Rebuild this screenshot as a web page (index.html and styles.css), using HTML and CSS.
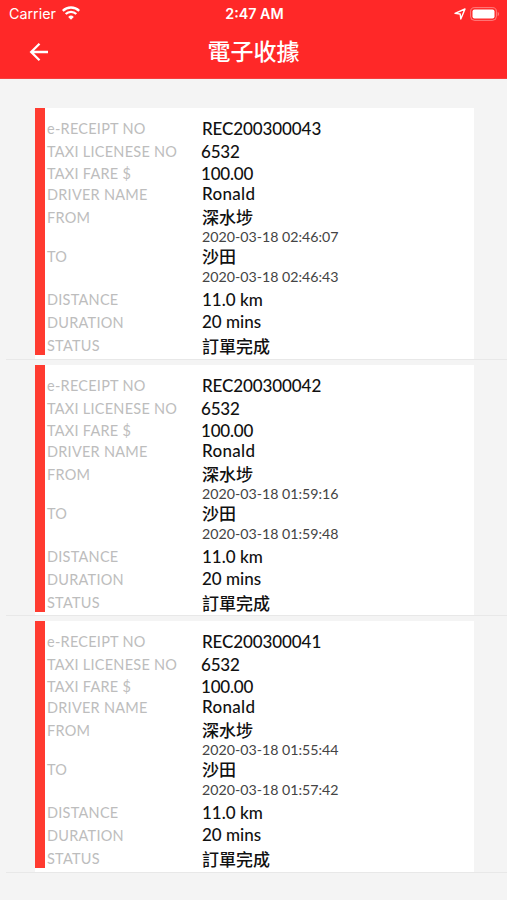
FILE: index.html
```html
<!DOCTYPE html>
<html lang="zh-Hant">
<head>
  <meta charset="UTF-8">
  <meta name="viewport" content="width=device-width, initial-scale=1.0">
  <title>電子收據</title>
  <link rel="stylesheet" href="styles.css">
</head>
<body>
  <header class="header">
    <!-- Status bar -->
    <div class="status-bar">
      <div class="carrier">
        <span>Carrier</span>
        <svg class="wifi" width="18" height="14" viewBox="0 0 18 14" fill="none" stroke="#fff" stroke-width="2.3">
          <path d="M.8 4.8a11.8 11.8 0 0 1 16.4 0"/>
          <path d="M3.7 8a7.5 7.5 0 0 1 10.6 0"/>
          <path d="M9 13.8L6.2 10.9a4 4 0 0 1 5.6 0z" fill="#fff" stroke="none"/>
        </svg>
      </div>
      <div class="time">2:47 AM</div>
      <div class="indicators">
        <svg width="12" height="12" viewBox="0 0 12 12" fill="none" stroke="#fff" stroke-width="1.4" stroke-linejoin="round">
          <path d="M1 5.4L11 1L6.8 11L6.2 6z"/>
        </svg>
        <svg width="30" height="14" viewBox="0 0 30 14">
          <rect x="0.6" y="0.6" width="25.8" height="12.8" rx="4" fill="none" stroke="#fff" stroke-opacity="0.4"/>
          <rect x="2.5" y="2.5" width="22" height="9" rx="2" fill="#fff"/>
          <path d="M27.7 4.8a2.5 2.5 0 0 1 0 4.4z" fill="#fff" fill-opacity="0.4"/>
        </svg>
      </div>
    </div>

    <!-- Title bar -->
    <div class="title-bar">
      <svg class="back" width="20" height="20" viewBox="0 0 20 20" fill="none" stroke="#fff" stroke-width="2.3">
        <path d="M19 10H2.5M10.5 1.7L2.2 10l8.3 8.3"/>
      </svg>
      <h1>電子收據</h1>
    </div>
  </header>

  <main class="receipts">
    <section class="item">
      <div class="card">
        <span class="label">e-RECEIPT NO</span><span class="value number">REC200300043</span>
        <span class="label">TAXI LICENESE NO</span><span class="value licence">6532</span>
        <span class="label">TAXI FARE $</span><span class="value fare">100.00</span>
        <span class="label">DRIVER NAME</span><span class="value name">Ronald</span>
        <span class="label">FROM</span><span class="value place">深水埗</span>
        <span class="date">2020-03-18 02:46:07</span>
        <span class="label">TO</span><span class="value place">沙田</span>
        <span class="date">2020-03-18 02:46:43</span>
        <span class="label">DISTANCE</span><span class="value">11.0 km</span>
        <span class="label">DURATION</span><span class="value duration">20 mins</span>
        <span class="label">STATUS</span><span class="value status">訂單完成</span>
      </div>
    </section>

    <section class="item">
      <div class="card">
        <span class="label">e-RECEIPT NO</span><span class="value number">REC200300042</span>
        <span class="label">TAXI LICENESE NO</span><span class="value licence">6532</span>
        <span class="label">TAXI FARE $</span><span class="value fare">100.00</span>
        <span class="label">DRIVER NAME</span><span class="value name">Ronald</span>
        <span class="label">FROM</span><span class="value place">深水埗</span>
        <span class="date">2020-03-18 01:59:16</span>
        <span class="label">TO</span><span class="value place">沙田</span>
        <span class="date">2020-03-18 01:59:48</span>
        <span class="label">DISTANCE</span><span class="value">11.0 km</span>
        <span class="label">DURATION</span><span class="value duration">20 mins</span>
        <span class="label">STATUS</span><span class="value status">訂單完成</span>
      </div>
    </section>

    <section class="item">
      <div class="card">
        <span class="label">e-RECEIPT NO</span><span class="value number">REC200300041</span>
        <span class="label">TAXI LICENESE NO</span><span class="value licence">6532</span>
        <span class="label">TAXI FARE $</span><span class="value fare">100.00</span>
        <span class="label">DRIVER NAME</span><span class="value name">Ronald</span>
        <span class="label">FROM</span><span class="value place">深水埗</span>
        <span class="date">2020-03-18 01:55:44</span>
        <span class="label">TO</span><span class="value place">沙田</span>
        <span class="date">2020-03-18 01:57:42</span>
        <span class="label">DISTANCE</span><span class="value">11.0 km</span>
        <span class="label">DURATION</span><span class="value duration">20 mins</span>
        <span class="label">STATUS</span><span class="value status">訂單完成</span>
      </div>
    </section>
  </main>
</body>
</html>
```

FILE: styles.css
```css
* {
  box-sizing: border-box;
}

body {
  margin: 0;
  min-height: 900px;
  background-color: #f4f4f4;
  font-family: Lato, "Noto Sans CJK TC", sans-serif;
}

.header {
  height: 79px;
  background-color: #ff2828;
  border-bottom: 1px solid #f5403f;
  color: #fff;
}

.status-bar {
  display: grid;
  grid-template-columns: 1fr auto 1fr;
  align-items: center;
  height: 27px;
  padding: 0 7px 0 9px;
  font-family: Inter, sans-serif;
  font-size: 14.3px;
}

.carrier {
  display: flex;
  align-items: center;
  gap: 6px;
}

.wifi {
  margin-bottom: 2px;
}

.time {
  font-weight: 600;
}

.indicators {
  display: flex;
  align-items: center;
  justify-content: flex-end;
  gap: 4px;
}

.title-bar {
  display: grid;
  grid-template-columns: 1fr auto 1fr;
  align-items: center;
  height: 50px;
}

.back {
  margin-left: 29px;
}

.title-bar h1 {
  margin: 0 0 4px;
  font-family: "Noto Sans CJK TC", sans-serif;
  font-size: 23px;
  font-weight: 500;
  line-height: 30px;
}

.receipts {
  padding-top: 24px;
}

.item {
  height: 256.5px;
  margin-left: 6px;
  padding: 5px 33px 0 29px;
  border-bottom: 1px solid #e8e8e8;
}

.card {
  display: grid;
  grid-template-columns: 155px 1fr;
  grid-template-rows: 23px 22px 21px 23px 19px 20px 20px 23px 23px 23px 20px;
  height: 250.5px;
  padding: 11px 0 0 12px;
  background: linear-gradient(#ff3b30, #ff3b30) 0 0 / 10px 247px no-repeat #fff;
  line-height: 20px;
}

.label {
  color: #bdbdbd;
  font-size: 14.5px;
  letter-spacing: 0.25px;
  white-space: nowrap;
}

.value {
  color: #111;
  font-size: 17px;
  font-weight: 500;
  white-space: nowrap;
}

.number {
  letter-spacing: -0.1px;
}

.licence,
.fare {
  margin-left: -1px;
  letter-spacing: -0.2px;
}

.name {
  margin-top: -1px;
  letter-spacing: 0.3px;
}

.duration {
  margin-top: -1px;
}

.place,
.status {
  font-family: "Noto Sans CJK TC", sans-serif;
}

.place {
  margin-top: -1px;
}

.date {
  grid-column: 2;
  color: #444;
  font-size: 14.2px;
}
```
